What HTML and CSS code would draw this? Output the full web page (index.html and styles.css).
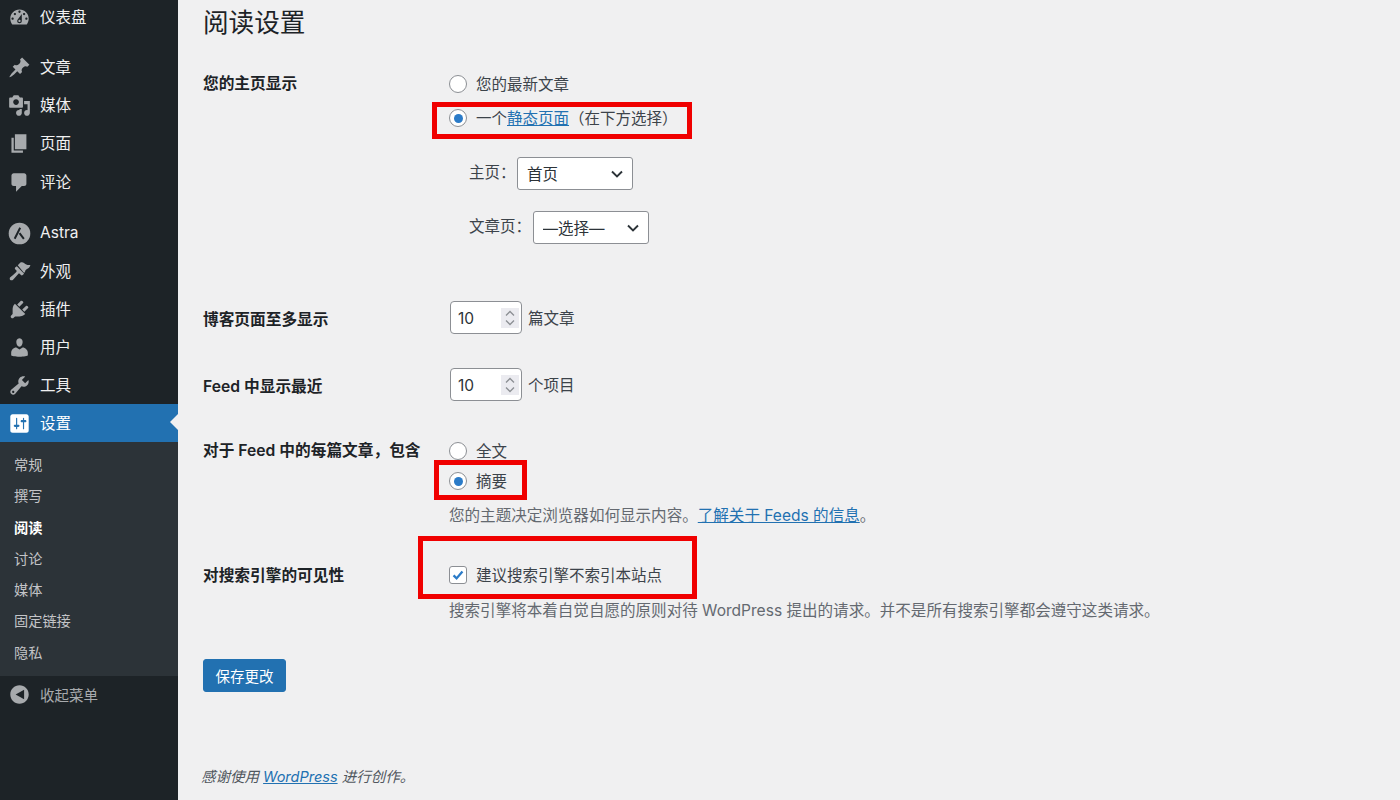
FILE: index.html
```html
<!DOCTYPE html>
<html lang="zh-CN">
<head>
    <meta charset="UTF-8">
    <title>阅读设置</title>
    <link rel="stylesheet" href="styles.css">
</head>
<body>

<div class="page">

    <!-- 左侧菜单 -->
    <aside class="sidebar">
        <ul class="menu">
            <li class="menu-item">
                <svg class="menu-icon" viewBox="0 0 20 20"><path d="M3.76 16h12.48c1.1-1.37 1.76-3.11 1.76-5 0-4.42-3.58-8-8-8s-8 3.58-8 8c0 1.89.66 3.63 1.76 5zM10 4c.55 0 1 .45 1 1s-.45 1-1 1-1-.45-1-1 .45-1 1-1zM6 6c.55 0 1 .45 1 1s-.45 1-1 1-1-.45-1-1 .45-1 1-1zm8 0c.55 0 1 .45 1 1s-.45 1-1 1-1-.45-1-1 .45-1 1-1zm-5.37 5.55L12 7v6c0 1.1-.9 2-2 2s-2-.9-2-2c0-.57.24-1.08.63-1.45zM4 10c.55 0 1 .45 1 1s-.45 1-1 1-1-.45-1-1 .45-1 1-1zm12 0c.55 0 1 .45 1 1s-.45 1-1 1-1-.45-1-1 .45-1 1-1zm-5 3c0-.55-.45-1-1-1s-1 .45-1 1 .45 1 1 1 1-.45 1-1z"/></svg>
                仪表盘
            </li>
            <li class="menu-item menu-gap">
                <svg class="menu-icon" viewBox="0 0 20 20"><path d="M10.44 3.02l1.82-1.82 6.36 6.35-1.83 1.82c-1.05-.68-2.48-.57-3.41.36l-.75.75c-.92.93-1.04 2.35-.35 3.41l-1.83 1.82-2.41-2.41-2.8 2.79c-.42.42-3.38 2.71-3.8 2.29s1.86-3.39 2.28-3.81l2.79-2.79L4.1 9.36l1.83-1.82c1.05.69 2.48.57 3.4-.36l.75-.75c.93-.92 1.05-2.35.36-3.41z"/></svg>
                文章
            </li>
            <li class="menu-item">
                <svg class="menu-icon" viewBox="0 0 20 20"><path d="M13 11V4c0-.55-.45-1-1-1h-1.67L9 1H5L3.67 3H2c-.55 0-1 .45-1 1v7c0 .55.45 1 1 1h10c.55 0 1-.45 1-1zM7 4.5c1.38 0 2.5 1.12 2.5 2.5S8.38 9.5 7 9.5 4.5 8.38 4.5 7 5.62 4.5 7 4.5zM14 6h5v10.5c0 1.38-1.12 2.5-2.5 2.5S14 17.88 14 16.5s1.12-2.5 2.5-2.5c.17 0 .34.02.5.05V9h-3V6zm-4 8.05V13h2v3.5c0 1.38-1.12 2.5-2.5 2.5S7 17.88 7 16.5 8.12 14 9.5 14c.17 0 .34.02.5.05z"/></svg>
                媒体
            </li>
            <li class="menu-item">
                <svg class="menu-icon" viewBox="0 0 20 20"><path d="M6 15V2h10v13H6zm-1 1h8v2H3V5h2v11z"/></svg>
                页面
            </li>
            <li class="menu-item menu-comments">
                <svg class="menu-icon" viewBox="0 0 20 20"><path d="M5 2h9c1.1 0 2 .9 2 2v7c0 1.1-.9 2-2 2h-2l-5 5v-5H5c-1.1 0-2-.9-2-2V4c0-1.1.9-2 2-2z"/></svg>
                评论
            </li>
            <li class="menu-item menu-gap-astra">
                <svg class="menu-icon" viewBox="0 0 20 20"><circle cx="10" cy="10" r="9.4"/><path class="astra-mark" d="M10.6 5L5.8 14.6M10 9.6l3.8 5"/></svg>
                Astra
            </li>
            <li class="menu-item">
                <svg class="menu-icon" viewBox="0 0 20 20"><path d="M8.5 4.6L10.6 2.4c1-.8 2.6-.4 3.6.4 1.3 1 2.5 1.8 5.3 1.5-.5 1.9-1.8 3-3 3.6-.8.4-1.4 1-1.6 2.2l-.9 1.2z"/><path d="M7.7 5.4l6.3 6.5-1.2 1.2c-.5.4-1.1.4-1.5 0l-1-1c-.4-.4-1-.4-1.4 0-1.5 1.6-3.1 3.6-4.7 5.2-.8.8-3 .3-2.7-1.3 0-.4.2-.7.5-.9 1.7-1.6 3.7-3.1 5.2-4.7.4-.4.4-1 0-1.4l-1-1c-.4-.4-.4-1 0-1.4z"/></svg>
                外观
            </li>
            <li class="menu-item">
                <svg class="menu-icon" viewBox="0 0 20 20"><path d="M13.11 4.36L9.87 7.6 8 5.73l3.24-3.24c.35-.34 1.05-.2 1.56.32.52.51.66 1.21.31 1.55zm-8 1.77l.91-1.12 9.01 9.01-1.19.84c-.71.71-2.63 1.16-3.82 1.16H6.14L4.9 17.26c-.59.59-1.54.59-2.12 0-.59-.58-.59-1.53 0-2.12l1.24-1.24v-3.88c0-1.13.4-3.19 1.09-3.89zm7.26 3.97l3.24-3.24c.34-.35 1.04-.21 1.55.31.52.51.66 1.21.31 1.55l-3.24 3.25z"/></svg>
                插件
            </li>
            <li class="menu-item">
                <svg class="menu-icon" viewBox="0 0 20 20"><path d="M10 9.25c-2.27 0-2.73-3.44-2.73-3.44C7 4.02 7.82 2 9.97 2c2.16 0 2.98 2.02 2.71 3.81 0 0-.41 3.44-2.68 3.44zm0 2.57L12.72 10c2.39 0 4.52 2.33 4.52 4.53v2.49s-3.65 1.13-7.24 1.13c-3.65 0-7.24-1.13-7.24-1.13v-2.49c0-2.25 1.94-4.48 4.47-4.48z"/></svg>
                用户
            </li>
            <li class="menu-item">
                <svg class="menu-icon" viewBox="0 0 20 20"><path d="M16.68 9.77c-1.34 1.34-3.3 1.67-4.95.99l-5.41 6.52c-.99.99-2.59.99-3.58 0s-.99-2.59 0-3.57l6.52-5.42c-.68-1.65-.35-3.61.99-4.95 1.28-1.28 3.12-1.62 4.72-1.06l-2.89 2.89 2.82 2.82 2.86-2.87c.53 1.58.18 3.39-1.08 4.65zM3.81 16.21c.4.39 1.04.39 1.43 0 .4-.4.4-1.04 0-1.43-.39-.4-1.03-.4-1.43 0-.39.39-.39 1.03 0 1.43z"/></svg>
                工具
            </li>
            <li class="menu-item menu-current">
                <svg class="menu-icon" viewBox="0 0 20 20"><path d="M18 16V4c0-1.1-.9-2-2-2H4c-1.1 0-2 .9-2 2v12c0 1.1.9 2 2 2h12c1.1 0 2-.9 2-2zM8 11h1c.55 0 1 .45 1 1s-.45 1-1 1H8v1.5c0 .28-.22.5-.5.5s-.5-.22-.5-.5V13H6c-.55 0-1-.45-1-1s.45-1 1-1h1V5.5c0-.28.22-.5.5-.5s.5.22.5.5V11zm5-2h-1c-.55 0-1-.45-1-1s.45-1 1-1h1V5.5c0-.28.22-.5.5-.5s.5.22.5.5V7h1c.55 0 1 .45 1 1s-.45 1-1 1h-1v5.5c0 .28-.22.5-.5.5s-.5-.22-.5-.5V9z"/></svg>
                设置
            </li>
        </ul>
        <ul class="submenu">
            <li>常规</li>
            <li>撰写</li>
            <li class="submenu-current">阅读</li>
            <li>讨论</li>
            <li>媒体</li>
            <li>固定链接</li>
            <li>隐私</li>
        </ul>
        <div class="collapse-menu">
            <svg class="menu-icon" viewBox="0 0 20 20"><path d="M18 10c0-4.42-3.58-8-8-8s-8 3.58-8 8 3.58 8 8 8 8-3.58 8-8zm-4-4.2v8.4L6.6 10z"/></svg>
            收起菜单
        </div>
    </aside>

    <!-- 设置表单 -->
    <main class="content">
        <h1>阅读设置</h1>

        <div class="form-row first-row">
            <div class="row-title">您的主页显示</div>
            <div class="row-body">
                <label class="choice"><span class="radio"></span>您的最新文章</label>
                <label class="choice"><span class="radio checked"></span>一个<a href="#">静态页面</a>（在下方选择）</label>
                <div class="page-select first-select">
                    <label>主页：</label>
                    <select><option>首页</option></select>
                </div>
                <div class="page-select">
                    <label>文章页：</label>
                    <select><option>—选择—</option></select>
                </div>
            </div>
        </div>

        <div class="form-row number-row posts-row">
            <div class="row-title">博客页面至多显示</div>
            <div class="row-body number-line">
                <div class="number-box">
                    10
                    <svg class="spinner" viewBox="0 0 18 20"><path d="M5 7.5l4-4 4 4M5 12.5l4 4 4-4"/></svg>
                </div>
                <span class="unit">篇文章</span>
            </div>
        </div>

        <div class="form-row number-row">
            <div class="row-title">Feed 中显示最近</div>
            <div class="row-body number-line">
                <div class="number-box">
                    10
                    <svg class="spinner" viewBox="0 0 18 20"><path d="M5 7.5l4-4 4 4M5 12.5l4 4 4-4"/></svg>
                </div>
                <span class="unit">个项目</span>
            </div>
        </div>

        <div class="form-row feed-row">
            <div class="row-title">对于 Feed 中的每篇文章，包含</div>
            <div class="row-body">
                <label class="choice short"><span class="radio"></span>全文</label>
                <label class="choice short"><span class="radio checked"></span>摘要</label>
                <p class="description feed-note">您的主题决定浏览器如何显示内容。<a href="#">了解关于 Feeds 的信息</a>。</p>
            </div>
        </div>

        <div class="form-row search-row">
            <div class="row-title">对搜索引擎的可见性</div>
            <div class="row-body">
                <label class="choice short">
                    <span class="checkbox"><svg viewBox="0 0 18 18"><path d="M4 9.4l3.4 3.4L14 5"/></svg></span>建议搜索引擎不索引本站点
                </label>
                <p class="description search-note">搜索引擎将本着自觉自愿的原则对待 WordPress 提出的请求。并不是所有搜索引擎都会遵守这类请求。</p>
            </div>
        </div>

        <button class="save-button">保存更改</button>

        <p class="footer-text">感谢使用 <a href="#">WordPress</a> 进行创作。</p>
    </main>

    <!-- 红色标注框 -->
    <div class="mark mark-static"></div>
    <div class="mark mark-summary"></div>
    <div class="mark mark-search"></div>
</div>

</body>
</html>
```
FILE: styles.css
```css
* {
    box-sizing: border-box;
}
html, body {
    margin: 0;
    height: 100%;
    overflow: hidden;
}
body {
    font-family: Inter, 'Noto Sans CJK SC', sans-serif;
    font-size: 15.5px;
    color: #3c434a;
    background-color: #f0f0f1;
}
a {
    color: #2271b1;
}
ul {
    list-style: none;
    margin: 0;
    padding: 0;
}
.page {
    position: relative;
    display: flex;
    width: 1400px;
    height: 800px;
    overflow: hidden;
}

/* 左侧菜单 */
.sidebar {
    width: 178px;
    flex-shrink: 0;
    background-color: #1d2327;
    color: #f0f0f1;
}
.menu {
    margin-top: -2px;
}
.menu-item {
    position: relative;
    display: flex;
    align-items: center;
    height: 38px;
    padding: 0 0 2px 8px;
    gap: 9px;
}
.menu-gap {
    margin-top: 12px;
}
.menu-comments {
    height: 39px;
    padding-bottom: 1px;
}
.menu-gap-astra {
    height: 39px;
    padding-bottom: 1px;
    margin-top: 12px;
}
.menu-icon {
    width: 23px;
    height: 23px;
    margin-top: 2px;
    flex-shrink: 0;
    fill: #a7aaad;
}
.astra-mark {
    fill: none;
    stroke: #1d2327;
    stroke-width: 1.7;
}
.menu-current {
    height: 38px;
    background-color: #2271b1;
    color: #fff;
}
.menu-current .menu-icon {
    fill: #fff;
}
.menu-current::after {
    content: "";
    position: absolute;
    right: 0;
    top: 10px;
    border: 8.5px solid transparent;
    border-right-color: #f0f0f1;
    border-left-width: 0;
}
.submenu {
    height: 234px;
    padding: 7px 0;
    background-color: #2c3338;
    color: #c3c4c7;
    font-size: 14.2px;
}
.submenu li {
    height: 31.3px;
    line-height: 31.3px;
    padding-left: 14px;
}
.submenu .submenu-current {
    color: #fff;
    font-weight: 600;
}
.collapse-menu {
    display: flex;
    align-items: center;
    height: 36px;
    padding-left: 8px;
    gap: 9px;
    font-size: 14.5px;
    color: #a7aaad;
}
.collapse-menu .menu-icon {
    margin-top: 0;
}

/* 设置表单 */
.content {
    flex: 1;
    padding-left: 25px;
}
h1 {
    margin: 0;
    font-size: 25.6px;
    font-weight: 400;
    line-height: 46px;
    color: #1d2327;
}
.form-row {
    display: flex;
}
.first-row {
    margin-top: 21px;
}
.posts-row {
    margin-top: 57px;
}
.number-row + .number-row {
    margin-top: 34px;
}
.feed-row {
    margin-top: 35px;
}
.search-row {
    margin-top: 32px;
}
.row-title {
    width: 246px;
    flex-shrink: 0;
    color: #1d2327;
    font-size: 15.7px;
    font-weight: 600;
    line-height: 34px;
    white-space: nowrap;
}
.feed-row .row-title {
    line-height: 30px;
}
.search-row .row-title {
    height: 30px;
    line-height: 32px;
}
.number-row .row-title {
    height: 33px;
    line-height: 38px;
}
.choice {
    display: flex;
    align-items: center;
    height: 34px;
    padding-bottom: 2px;
    white-space: nowrap;
}
.choice.short {
    height: 30px;
}
.radio {
    width: 18px;
    height: 18px;
    margin: 2px 9px 0 0;
    border: 1px solid #8c8f94;
    border-radius: 50%;
    background-color: #fff;
    display: flex;
    align-items: center;
    justify-content: center;
}
.radio.checked::before {
    content: "";
    width: 9px;
    height: 9px;
    border-radius: 50%;
    background-color: #2b7bc8;
}
.checkbox {
    width: 18px;
    height: 18px;
    margin: 2px 9px 0 0;
    border: 1px solid #8c8f94;
    border-radius: 3px;
    background-color: #fff;
    display: flex;
}
.checkbox svg {
    width: 16px;
    height: 16px;
    fill: none;
    stroke: #2b7bc8;
    stroke-width: 2.6;
}
.page-select {
    display: flex;
    align-items: center;
    gap: 1.5px;
    margin: 21px 0 0 20px;
}
.page-select.first-select {
    margin-top: 22px;
}
.page-select label {
    margin-bottom: 5px;
}
select {
    appearance: none;
    width: 116px;
    height: 33px;
    padding: 2px 9px 0;
    border: 1px solid #8c8f94;
    border-radius: 3px;
    color: #2c3338;
    font: inherit;
    background: #fff url("data:image/svg+xml,%3Csvg xmlns='http://www.w3.org/2000/svg' viewBox='0 0 12 8'%3E%3Cpath d='M1 1.5l5 5 5-5' fill='none' stroke='%232c3338' stroke-width='1.9'/%3E%3C/svg%3E") no-repeat right 9px center / 12px 8px;
}
.number-line {
    display: flex;
    align-items: center;
    gap: 6px;
    margin-left: 1px;
}
.number-box {
    display: flex;
    align-items: center;
    justify-content: space-between;
    width: 72px;
    height: 33px;
    padding: 2px 2px 0 7px;
    border: 1px solid #8c8f94;
    border-radius: 4px;
    background-color: #fff;
    color: #2c3338;
}
.spinner {
    width: 18px;
    height: 20px;
    margin-top: -2px;
    background-color: #ebebf0;
    fill: none;
    stroke: #8c8f94;
    stroke-width: 1.3;
}
.unit {
    margin-bottom: 2px;
}
.description {
    margin: 0;
    font-size: 15.56px;
    line-height: 24px;
    color: #646970;
    white-space: nowrap;
}
.feed-note {
    margin-top: 8px;
}
.search-note {
    margin-top: 9px;
}
.save-button {
    display: block;
    width: 83px;
    height: 33px;
    margin-top: 36px;
    padding: 0;
    border: 1px solid #2271b1;
    border-radius: 3px;
    background-color: #2271b1;
    color: #fff;
    font: inherit;
    font-size: 14.5px;
}
.footer-text {
    margin: 73px 0 0 -2px;
    line-height: 24px;
    font-size: 14.5px;
    font-style: italic;
    color: #50575e;
}

/* 红色标注框，盖在表单上面 */
.mark {
    position: absolute;
    border: 5px solid #f00000;
}
.mark-static {
    left: 432px;
    top: 102px;
    width: 260px;
    height: 37px;
}
.mark-summary {
    left: 434px;
    top: 460px;
    width: 93px;
    height: 40px;
}
.mark-search {
    left: 418px;
    top: 536px;
    width: 279px;
    height: 63px;
}
```
